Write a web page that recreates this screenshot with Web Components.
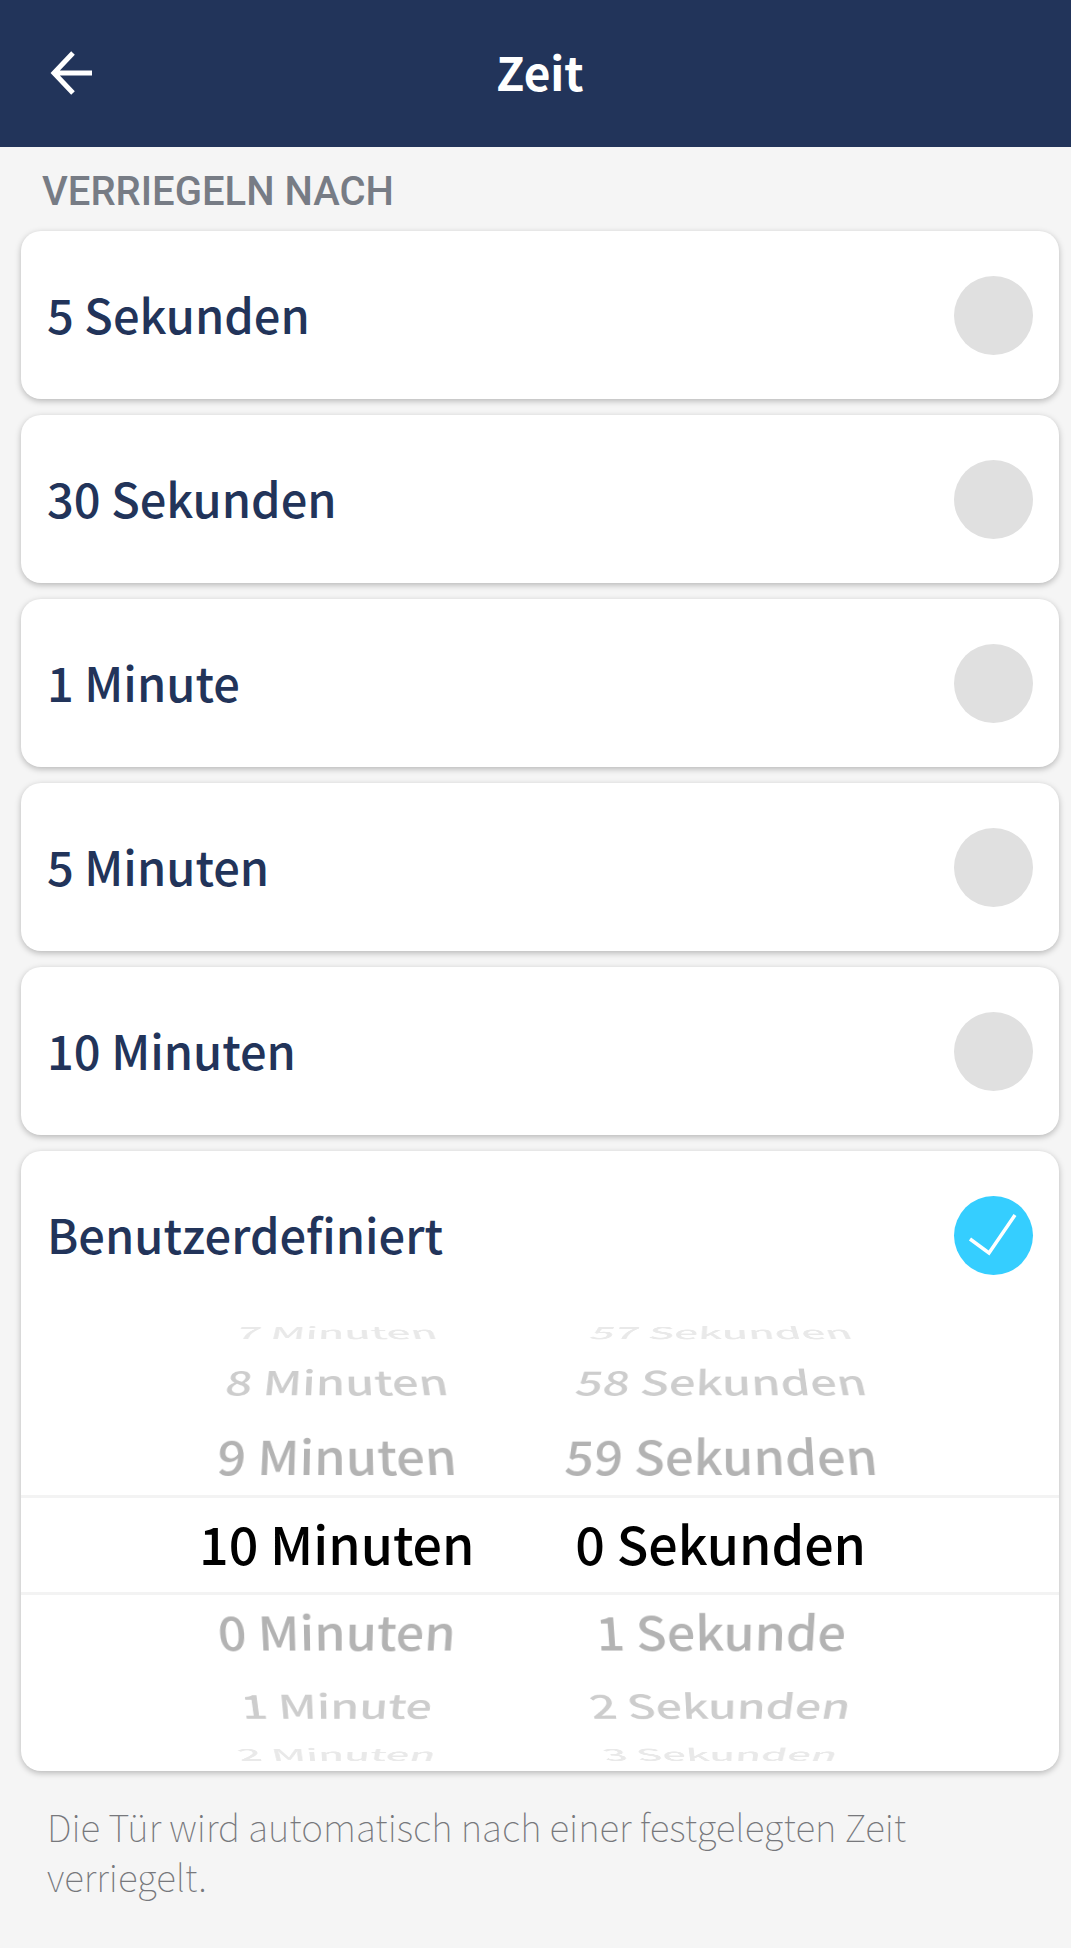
<!DOCTYPE html>
<html lang="de">
<head>
<meta charset="utf-8">
<meta name="viewport" content="width=device-width, initial-scale=1">
<title>Zeit</title>
<style>
  html { background: #f5f5f5; }
  body { margin: 0; font-family: "Noto Sans CJK SC", "Open Sans", sans-serif; color: #22345a; }
</style>
</head>
<body>
<time-page>
  <app-bar slot="bar">Zeit</app-bar>
  <section-title>Verriegeln nach</section-title>
  <option-card value="5s">5 Sekunden</option-card>
  <option-card value="30s">30 Sekunden</option-card>
  <option-card value="1m">1 Minute</option-card>
  <option-card value="5m">5 Minuten</option-card>
  <option-card value="10m">10 Minuten</option-card>
  <option-card value="custom" checked>Benutzerdefiniert
    <duration-picker slot="extra">
      <picker-wheel label="Minuten" values="7 Minuten,8 Minuten,9 Minuten,10 Minuten,0 Minuten,1 Minute,2 Minuten"></picker-wheel>
      <picker-wheel label="Sekunden" values="57 Sekunden,58 Sekunden,59 Sekunden,0 Sekunden,1 Sekunde,2 Sekunden,3 Sekunden"></picker-wheel>
    </duration-picker>
  </option-card>
  <hint-text slot="hint">Die Tür wird automatisch nach einer festgelegten Zeit verriegelt.</hint-text>
</time-page>

<script>
class Base extends HTMLElement {
  constructor() {
    super();
    this.attachShadow({ mode: "open" });
  }
  connectedCallback() {
    this.shadowRoot.innerHTML = this.render();
    this.ready();
  }
  ready() {}
}

customElements.define("time-page", class extends Base {
  render() {
    return `<style>
      :host { display: block; }
      main { display: flex; flex-direction: column; gap: 16px; padding: 0 12px 40px 21px; }
    </style>
    <slot name="bar"></slot>
    <main><slot></slot><slot name="hint"></slot></main>`;
  }
});

customElements.define("app-bar", class extends Base {
  render() {
    return `<style>
      :host { display: block; background: #22345a; color: #fff; }
      header { box-sizing: border-box; display: grid; grid-template-columns: 100px 1fr 100px; align-items: center; height: 147px; padding: 0 12px 2px 21px; }
      button { width: 100px; height: 100px; padding: 0 0 0 29px; border: 0; background: none; color: inherit; display: flex; align-items: center; cursor: pointer; }
      svg { display: block; width: 44px; height: 44px; }
      h1 { margin: 0; padding-bottom: 4px; text-align: center; font-size: 46px; line-height: 60px; font-weight: 700; }
    </style>
    <header>
      <button type="button" aria-label="Zurück">
        <svg viewBox="0 0 44 44" fill="none" stroke="currentColor" stroke-width="5"><path d="M42 22H4M23 2L4 22l19 20"/></svg>
      </button>
      <h1><slot></slot></h1>
    </header>`;
  }
});

customElements.define("section-title", class extends Base {
  render() {
    return `<style>
      :host { display: block; }
      h2 { margin: 0; padding: 22px 21px 0; font: 500 40px/46px Roboto, sans-serif; text-transform: uppercase; color: #777c85; }
    </style><h2><slot></slot></h2>`;
  }
});

customElements.define("option-card", class extends Base {
  render() {
    return `<style>
      :host { display: block; background: #fff; border-radius: 20px; box-shadow: 0 2px 6px rgba(0,0,0,.26); overflow: hidden; }
      label { display: flex; align-items: center; justify-content: space-between; height: 168px; padding: 0 26px; cursor: pointer;
              font-size: 47px; line-height: 60px; font-weight: 500; }
      .text { padding-bottom: 2px; }
      .mark { display: grid; width: 79px; height: 79px; }
      .mark > * { grid-area: 1 / 1; }
      input { appearance: none; margin: 0; width: 100%; height: 100%; border-radius: 50%; background: #e0e0e0; cursor: pointer; }
      input:checked { background: #35ceff; }
      svg { display: block; width: 100%; height: 100%; visibility: hidden; pointer-events: none; }
      input:checked + svg { visibility: visible; }
    </style>
    <label>
      <span class="text"><slot></slot></span>
      <span class="mark">
        <input type="radio" name="delay" value="${this.getAttribute("value")}" ${this.hasAttribute("checked") ? "checked" : ""}>
        <svg viewBox="0 0 79 79" fill="none" stroke="#fff" stroke-width="3.5"><path d="M16 43l19 14 26-38"/></svg>
      </span>
    </label>
    <slot name="extra"></slot>`;
  }
  ready() {
    this.shadowRoot.querySelector("input").addEventListener("change", () => {
      for (const card of document.querySelectorAll("option-card"))
        if (card !== this) card.shadowRoot.querySelector("input").checked = false;
    });
  }
});

customElements.define("duration-picker", class extends Base {
  render() {
    return `<style>
      :host { display: grid; }
      .band, .wheels { grid-area: 1 / 1; }
      .band { align-self: center; box-sizing: border-box; height: 100px; border: solid #f3f3f3; border-width: 3px 0; }
      .wheels { display: flex; justify-content: center; gap: 86px; }
    </style>
    <div class="band"></div>
    <div class="wheels"><slot></slot></div>`;
  }
});

customElements.define("picker-wheel", class extends Base {
  render() {
    const rows = this.getAttribute("values").split(",");
    return `<style>
      :host { display: block; }
      ul { list-style: none; margin: 0; padding: 0; }
      li { box-sizing: border-box; display: grid; grid-template-rows: 100%; place-items: center; padding-bottom: 4px;
           white-space: nowrap; font-size: 52px; line-height: 60px; font-weight: 500; color: #000; }
      .d0 { height: 96px; }
      .d1 { height: 80px; color: #b3b3b3; --tilt: 22deg; --depth: -18px; }
      .d2 { height: 68px; color: #cdcdcd; --tilt: 45deg; --depth: -67px; }
      .d3 { height: 30px; color: #e9e9e9; --tilt: 67deg; --depth: -142px; }
      .up span { transform: perspective(600px) translateZ(var(--depth)) rotateX(var(--tilt)); }
      .down span { transform: perspective(600px) translateZ(var(--depth)) rotateX(calc(-1 * var(--tilt))); }
    </style>
    <ul role="listbox" aria-label="${this.getAttribute("label")}">
      ${rows.map((t, i) => `<li role="option" aria-selected="${i === 3}" class="d${Math.abs(i - 3)} ${i < 3 ? "up" : i > 3 ? "down" : ""}"><span>${t}</span></li>`).join("")}
    </ul>`;
  }
});

customElements.define("hint-text", class extends Base {
  render() {
    return `<style>
      :host { display: block; }
      p { margin: 0; padding: 14px 26px; font-size: 37px; line-height: 50px; font-weight: 100; color: #77787c; }
    </style><p><slot></slot></p>`;
  }
});
</script>
</body>
</html>
